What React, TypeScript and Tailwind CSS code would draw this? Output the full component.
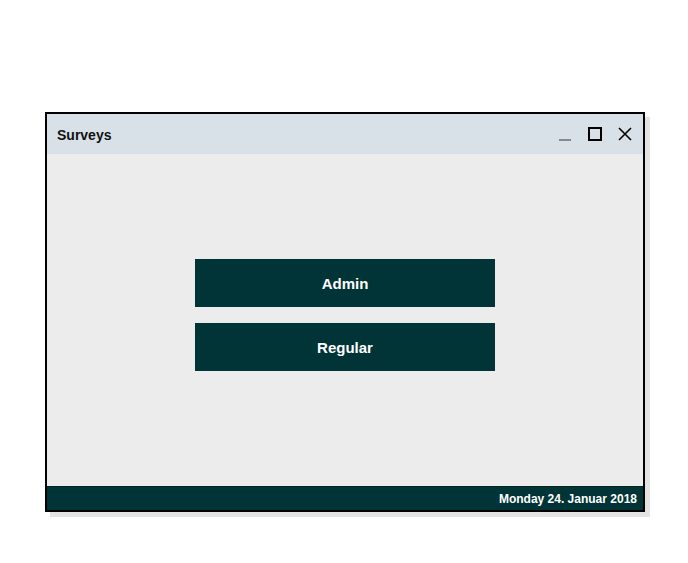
export default function App() {
  return (
    <main className="min-h-screen bg-white pt-[112px] pl-[45px]" style={{ fontFamily: '"Liberation Sans", Arial, sans-serif' }}>
      <div className="flex h-[400px] w-[600px] flex-col border-2 border-black bg-[#ececec] shadow-[5px_5px_0_#e3e3e3]">
        <div className="flex h-[40px] items-center justify-between bg-[#d9e1e8] pl-[10px] pr-[10px]">
          <span className="pt-[2px] text-[14px] font-bold text-[#111]">Surveys</span>
          <div className="flex items-center gap-[14px]">
            <svg width="16" height="16" viewBox="0 0 16 16">
              <line x1="2" y1="14" x2="14" y2="14" stroke="#888" strokeWidth="2" />
            </svg>
            <svg width="16" height="16" viewBox="0 0 16 16">
              <rect x="2" y="2" width="12" height="12" fill="none" stroke="#000" strokeWidth="2" />
            </svg>
            <svg width="16" height="16" viewBox="0 0 16 16">
              <path d="M2 2 L14 14 M14 2 L2 14" stroke="#000" strokeWidth="1.6" />
            </svg>
          </div>
        </div>
        <div className="flex flex-1 flex-col items-center justify-center gap-4 pb-[10px]">
          <button className="h-[48px] w-[300px] bg-[#003436] pt-[3px] text-[15px] font-bold text-white">Admin</button>
          <button className="h-[48px] w-[300px] bg-[#003436] pt-[3px] text-[15px] font-bold text-white">Regular</button>
        </div>
        <div className="flex h-[24px] items-center justify-end border-t border-[#00281c] bg-[#003436] pr-[6px]">
          <span className="text-[12px] font-bold text-white">Monday 24. Januar 2018</span>
        </div>
      </div>
    </main>
  );
}
